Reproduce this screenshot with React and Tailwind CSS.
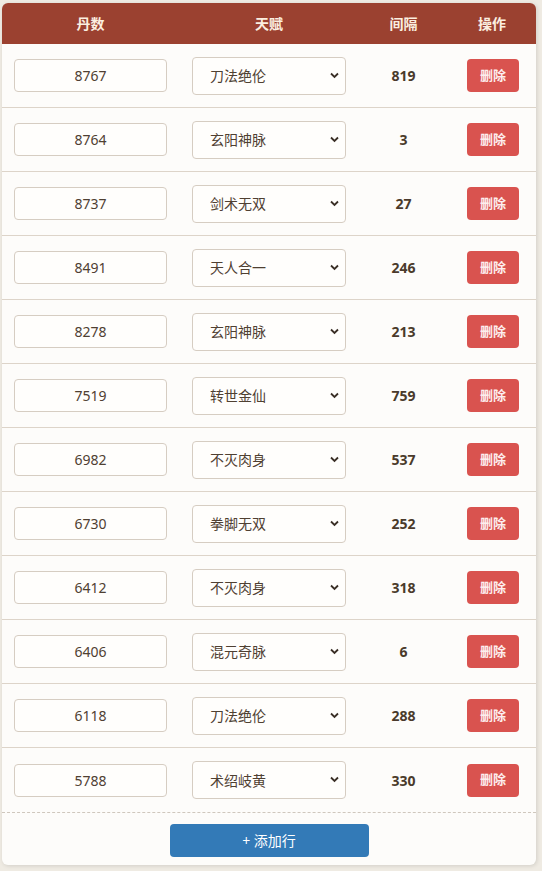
import React from "react";

const rows = [
  ["8767", "刀法绝伦", 819],
  ["8764", "玄阳神脉", 3],
  ["8737", "剑术无双", 27],
  ["8491", "天人合一", 246],
  ["8278", "玄阳神脉", 213],
  ["7519", "转世金仙", 759],
  ["6982", "不灭肉身", 537],
  ["6730", "拳脚无双", 252],
  ["6412", "不灭肉身", 318],
  ["6406", "混元奇脉", 6],
  ["6118", "刀法绝伦", 288],
  ["5788", "术绍岐黄", 330],
];

const talents = ["刀法绝伦", "玄阳神脉", "剑术无双", "天人合一", "转世金仙", "不灭肉身", "拳脚无双", "混元奇脉", "术绍岐黄"];

const font = { fontFamily: '"Noto Sans", "Noto Sans CJK SC", sans-serif' };

function Row({ n, t, gap, last }) {
  return (
    <div className={`grid grid-cols-[177px_180px_89px_88px] h-[64px] items-center ${last ? "" : "border-b border-[#ddd4c9]"}`}>
      <div className="flex justify-center">
        <input
          defaultValue={n}
          className="w-[153px] h-[33px] rounded-[4px] border border-[#d6cdc2] bg-[#fffefc] text-center text-[14px] text-[#4f4032] outline-none"
          style={font}
        />
      </div>
      <div className="flex justify-center">
        <div className="relative w-[154px] h-[38px]">
          <select
            defaultValue={t}
            className="appearance-none w-full h-full rounded-[4px] border border-[#d6cdc2] bg-[#fffefc] pl-[17px] text-[14px] text-[#4f4032] outline-none"
            style={font}
          >
            {talents.map((x) => (
              <option key={x}>{x}</option>
            ))}
          </select>
          <svg className="pointer-events-none absolute right-[7px] top-[15px]" width="9" height="7" viewBox="0 0 9 7">
            <path d="M1 1.5 L4.5 5 L8 1.5" fill="none" stroke="#3a2f26" strokeWidth="1.8" />
          </svg>
        </div>
      </div>
      <div className="text-center text-[14px] font-bold text-[#4a3a2b]" style={font}>{gap}</div>
      <div className="flex justify-center pl-[2px]">
        <button
          className="w-[52px] h-[33px] rounded-[4px] bg-[#d9534f] text-[13px] font-bold text-[#fdeeee]"
          style={font}
        >
          删除
        </button>
      </div>
    </div>
  );
}

export default function App() {
  return (
    <div className="min-h-[871px] bg-[#efebe3] pt-[3px] pl-[2px]" style={font}>
      <div className="w-[534px] rounded-[6px] bg-[#fdfcfa] shadow-[1px_1px_4px_rgba(0,0,0,0.12)]">
        <div className="grid grid-cols-[177px_180px_89px_88px] h-[41px] items-center rounded-t-[6px] bg-[#9b4130] text-[14px] font-bold text-[#fbefe0]">
          <div className="text-center">丹数</div>
          <div className="text-center">天赋</div>
          <div className="text-center">间隔</div>
          <div className="text-center">操作</div>
        </div>
        {rows.map(([n, t, g], i) => (
          <Row key={i} n={n} t={t} gap={g} last={i === rows.length - 1} />
        ))}
        <div className="border-t border-dashed border-[#cfc7bd] flex justify-center pt-[11px] pb-[8px]">
          <button className="w-[199px] h-[33px] rounded-[4px] bg-[#337ab7] text-[14px] text-white" style={font}>
            + 添加行
          </button>
        </div>
      </div>
    </div>
  );
}
